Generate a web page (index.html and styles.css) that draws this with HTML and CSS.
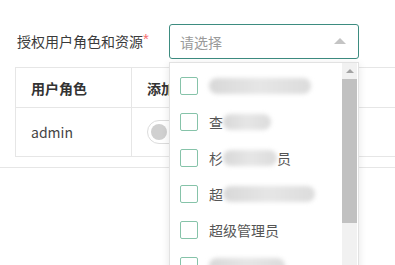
FILE: index.html
```html
<!DOCTYPE html>
<html lang="zh-CN">
<head>
    <meta charset="UTF-8">
    <meta name="viewport" content="width=device-width, initial-scale=1.0">
    <title>授权用户角色和资源</title>
    <link rel="stylesheet" href="styles.css">
</head>
<body>
    <div class="page">
        <div class="form-row">
            <label class="form-label">授权用户角色和资源<span class="required">*</span></label>
            <div class="select-wrap">
                <div class="select-box">
                    <span class="placeholder">请选择</span>
                    <span class="arrow"></span>
                </div>

                <!-- dropdown lies over the table -->
                <div class="dropdown">
                    <ul class="options">
                        <li><span class="check"></span><span class="blur" style="width: 102px"></span></li>
                        <li><span class="check"></span><span class="txt">查</span><span class="blur" style="width: 48px"></span></li>
                        <li><span class="check"></span><span class="txt">杉</span><span class="blur" style="width: 54px"></span><span class="txt">员</span></li>
                        <li><span class="check"></span><span class="txt">超</span><span class="blur" style="width: 92px"></span></li>
                        <li><span class="check"></span><span class="txt">超级管理员</span></li>
                        <li><span class="check"></span><span class="blur" style="width: 76px"></span></li>
                    </ul>
                    <div class="scrollbar">
                        <span class="scroll-up"></span>
                        <span class="thumb"></span>
                    </div>
                </div>
            </div>
        </div>

        <div class="table-wrap">
            <table class="role-table">
                <tr>
                    <th class="col-role">用户角色</th>
                    <th>添加</th>
                </tr>
                <tr>
                    <td class="col-role">admin</td>
                    <td><span class="switch"><span class="knob"></span></span></td>
                </tr>
            </table>
        </div>

        <div class="divider"></div>
    </div>
</body>
</html>
```

FILE: styles.css
```css
html, body {
    margin: 0;
    padding: 0;
    background: #ffffff;
}

body {
    font-family: "Noto Sans CJK SC", "Noto Sans", "Liberation Sans", sans-serif;
    font-size: 14px;
    color: #333333;
    overflow: hidden;
}

.page {
    width: 395px;
    height: 265px;
    overflow: hidden;
}

/* Form row */
.form-row {
    display: flex;
    align-items: center;
    padding-top: 24px;
    padding-left: 17px;
    height: 35px;
}

.form-label {
    width: 152px;
    font-size: 14px;
    line-height: 20px;
    color: #3a3a3a;
}

.required {
    color: #f56c6c;
    font-family: "Liberation Sans", sans-serif;
    font-size: 15px;
    position: relative;
    top: -3px;
}

.select-wrap {
    position: relative;
}

.select-box {
    box-sizing: border-box;
    width: 190px;
    height: 35px;
    border: 1px solid #3d8c80;
    border-radius: 3px;
    display: flex;
    align-items: center;
    justify-content: space-between;
    padding: 0 12px 0 10px;
}

.placeholder {
    color: #9a9a9a;
    font-size: 14px;
}

.arrow {
    width: 0;
    height: 0;
    border-left: 6px solid transparent;
    border-right: 6px solid transparent;
    border-bottom: 6px solid #c4c4c4;
    margin-top: -2px;
}

/* Dropdown */
.dropdown {
    position: absolute;
    top: 38px;
    left: 0;
    box-sizing: border-box;
    width: 190px;
    height: 220px;
    background: #ffffff;
    border: 1px solid #e2e2e2;
    box-shadow: 0 2px 8px rgba(0, 0, 0, 0.1);
    display: flex;
    z-index: 10;
}

.options {
    list-style: none;
    margin: 0;
    padding: 5px 0 0 0;
    flex: 1;
}

.options li {
    height: 36px;
    display: flex;
    align-items: center;
    padding-left: 10px;
}

.check {
    box-sizing: border-box;
    width: 18px;
    height: 18px;
    border: 1px solid #86c3a9;
    border-radius: 2px;
    margin-right: 11px;
    flex-shrink: 0;
}

.txt {
    color: #555555;
    font-size: 14px;
    line-height: 20px;
}

.blur {
    display: inline-block;
    height: 16px;
    border-radius: 8px;
    background: linear-gradient(90deg, #d8d8d8, #e6e6e6 50%, #dcdcdc);
    filter: blur(2px);
}

.scrollbar {
    width: 15px;
    margin-right: 1px;
    background: #f1f1f1;
    display: flex;
    flex-direction: column;
    align-items: center;
}

.scroll-up {
    width: 0;
    height: 0;
    border-left: 4px solid transparent;
    border-right: 4px solid transparent;
    border-bottom: 4px solid #a3a3a3;
    margin: 6px 0 6px;
}

.thumb {
    width: 15px;
    height: 144px;
    background: #c1c1c1;
}

/* Table */
.table-wrap {
    padding-top: 8px;
    padding-left: 15px;
}

.role-table {
    border-collapse: collapse;
    width: 420px;
    table-layout: fixed;
}

.role-table th,
.role-table td {
    border: 1px solid #e6e6e6;
    text-align: left;
    padding: 0 15px;
    font-size: 14px;
}

.role-table th {
    height: 39px;
    font-weight: bold;
    color: #333333;
}

.role-table td {
    height: 48px;
    color: #444444;
}

.col-role {
    width: 85px;
}

.switch {
    display: inline-block;
    box-sizing: border-box;
    width: 44px;
    height: 24px;
    border: 1px solid #dcdcdc;
    border-radius: 12px;
    position: relative;
    vertical-align: middle;
}

.knob {
    position: absolute;
    left: 3px;
    top: 3px;
    width: 16px;
    height: 16px;
    border-radius: 50%;
    background: #d0d0d0;
}

.divider {
    margin-top: 10px;
    border-top: 1px solid #e6e6e6;
}
```
